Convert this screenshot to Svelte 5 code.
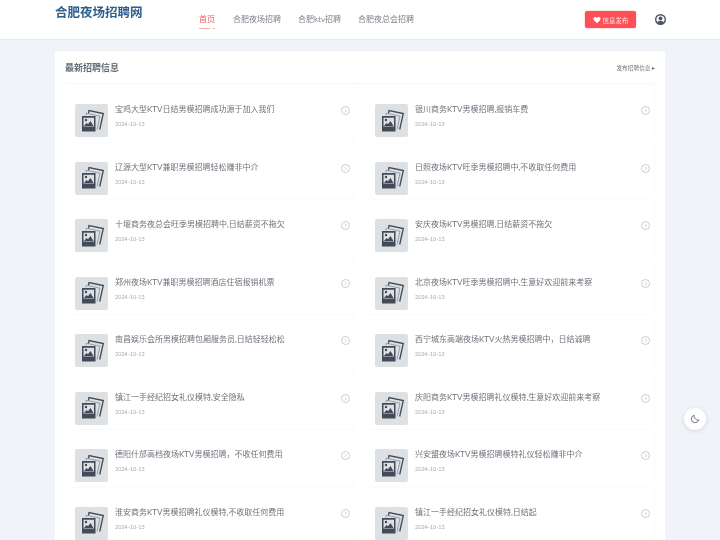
<script>
    const nav = ['首页', '合肥夜场招聘', '合肥ktv招聘', '合肥夜总会招聘'];

    const jobs = [
        '宝鸡大型KTV日结男模招聘成功源于加入我们',
        '银川商务KTV男模招聘,报销车费',
        '辽源大型KTV兼职男模招聘轻松赚非中介',
        '日照夜场KTV旺季男模招聘中,不收取任何费用',
        '十堰商务夜总会旺季男模招聘中,日结薪资不拖欠',
        '安庆夜场KTV男模招聘,日结薪资不拖欠',
        '郑州夜场KTV兼职男模招聘酒店住宿报销机票',
        '北京夜场KTV旺季男模招聘中,生意好欢迎前来考察',
        '南昌娱乐会所男模招聘包厢服务员,日结轻轻松松',
        '西宁城东高端夜场KTV火热男模招聘中，日结诚聘',
        '镇江一手经纪招女礼仪模特,安全隐私',
        '庆阳商务KTV男模招聘礼仪模特,生意好欢迎前来考察',
        '德阳什邡高档夜场KTV男模招聘，不收任何费用',
        '兴安盟夜场KTV男模招聘模特礼仪轻松赚非中介',
        '淮安商务KTV男模招聘礼仪模特,不收取任何费用',
        '镇江一手经纪招女礼仪模特,日结起'
    ];
</script>

<header class="topbar">
    <div class="brand">合肥夜场招聘网</div>
    <nav class="menu">
        {#each nav as item, i}
            <span class="menu-item" class:active={i === 0}>{item}</span>
        {/each}
    </nav>
    <button class="publish">
        <svg viewBox="0 0 24 24" width="8" height="8"><path fill="#fff" d="M12 22 3 12.500C.5 9.800 1 5.500 4 3.800c2.800-1.500 6-.5 8 2.200 2-2.700 5.200-3.700 8-2.200 3 1.700 3.500 6 1 8.700z"/></svg>
        信息发布
    </button>
    <svg class="user" viewBox="0 0 24 24" width="11" height="11">
        <circle cx="12" cy="12" r="10.500" fill="none" stroke="#4b5563" stroke-width="3"/>
        <circle cx="12" cy="9.500" r="4.200" fill="#4b5563"/>
        <path fill="#4b5563" d="M4.500 19c1.500-3.500 4-4.500 7.500-4.500s6 1 7.500 4.500c-2 2-4.500 3.500-7.500 3.500S6.500 21 4.500 19z"/>
    </svg>
</header>

<main class="card">
    <div class="card-head">
        <h2>最新招聘信息</h2>
        <span class="more">发布招聘信息 ▸</span>
    </div>
    <div class="list">
        {#each jobs as title}
            <div class="job">
                <div class="thumb">
                    <svg viewBox="0 0 24 24" width="24" height="24">
                        <path fill="none" stroke="#414b59" stroke-width="1.300" d="M7.500 4.500 8 1.500 22.300 4.500 18.700 20.500"/>
                        <path fill="none" stroke="#7a828d" stroke-width=".7" d="M5 6.500 5.300 4.200 19 7.200 16 20.500"/>
                        <path fill="#414b59" fill-rule="evenodd" d="M1 7H14.500V22.500H1zM2.500 8.700V17.500H13V8.700z"/>
                        <circle cx="5" cy="11" r="1.200" fill="#414b59"/>
                        <path fill="#414b59" d="M3 17 5.500 14 7 15.300 9.500 12 12.500 17z"/>
                    </svg>
                </div>
                <div class="job-text">
                    <div class="job-title">{title}</div>
                    <div class="job-date">2024-10-13</div>
                </div>
                <svg class="arrow" viewBox="0 0 18 18" width="9" height="9">
                    <circle cx="9" cy="9" r="8" fill="none" stroke="#a9afb7" stroke-width="1.200"/>
                    <path fill="none" stroke="#a9afb7" stroke-width="1.200" d="M7.500 5.500 11 9 7.500 12.500"/>
                </svg>
            </div>
        {/each}
    </div>
</main>

<button class="theme" aria-label="夜间模式">
    <svg viewBox="0 0 24 24" width="10" height="10">
        <path fill="none" stroke="#555c66" stroke-width="2" d="M10 3a9 9 0 1 0 11 11c-5 1.500-12-3-11-11z"/>
    </svg>
</button>

<style>
    :global(body) {
        background: #f0f3f7;
        font-family: Lato, "Noto Sans CJK SC", sans-serif;
        height: 540px;
        overflow: hidden;
    }

    .topbar {
        height: 39px;
        background: #fff;
        border-bottom: 1px solid #e6e9ed;
        display: flex;
        align-items: flex-start;
        padding-left: 55px;
        padding-right: 54px;
    }
    .brand, .menu, .publish, .user, .card-head, .list, .theme svg {
        filter: blur(.3px);
    }
    .brand {
        width: 144px;
        font-size: 12.500px;
        line-height: 16px;
        padding-top: 5px;
        font-weight: 700;
        color: #2e5f8c;
    }
    .menu {
        display: flex;
        gap: 17px;
        flex: 1;
    }
    .menu-item {
        font-size: 8px;
        line-height: 12px;
        padding: 13px 0 4px;
        color: #7d838b;
        position: relative;
    }
    .menu-item.active {
        color: #ef5a64;
        margin-right: 1px;
    }
    .menu-item.active::after {
        content: '';
        position: absolute;
        left: 0;
        right: 0;
        bottom: 0;
        height: 1px;
        background: linear-gradient(90deg, #f7a9ae 70%, #fff 70%, #fff 85%, #f7a9ae 85%);
    }
    .publish {
        margin-top: 11px;
        width: 51px;
        height: 17px;
        border: none;
        border-radius: 2px;
        background: #fb5055;
        box-shadow: 0 0 2px rgba(251, 80, 85, .5);
        color: #fdd;
        font: inherit;
        font-size: 6.500px;
        display: flex;
        align-items: center;
        justify-content: center;
        gap: 2px;
        padding: 0;
    }
    .user {
        margin: 14px 0 0 19px;
    }

    .card {
        width: 610px;
        margin: 11px 0 0 55px;
        background: #fff;
        border-radius: 2px;
        padding: 0 10px;
        box-sizing: border-box;
    }
    .card-head {
        height: 32px;
        display: flex;
        justify-content: space-between;
        align-items: center;
        border-bottom: 1px solid #f6f7f9;
    }
    h2 {
        margin: 0;
        font-size: 9px;
        font-weight: 700;
        color: #646a74;
    }
    .more {
        font-size: 5.700px;
        color: #70767e;
    }
    .list {
        display: grid;
        grid-template-columns: 290px 290px;
        column-gap: 10px;
        grid-auto-rows: 57.500px;
        padding-top: 1px;
    }
    .job {
        display: flex;
        align-items: flex-start;
        padding: 19px 0 0 10px;
        box-sizing: border-box;
        border-right: 1px solid #fbfbfc;
        border-bottom: 1px solid #fbfbfc;
    }
    .thumb {
        flex: none;
        width: 33px;
        height: 33px;
        box-sizing: border-box;
        padding-left: 3px;
        background: #dde1e4;
        border-radius: 2px;
        display: flex;
        align-items: center;
        justify-content: center;
    }
    .job-text {
        flex: 1;
        margin: -1px 0 0 7px;
    }
    .job-title {
        font-size: 8px;
        line-height: 12px;
        color: #6d737b;
    }
    .job-date {
        font-size: 5.500px;
        line-height: 8px;
        margin-top: 5px;
        color: #a7abb1;
    }
    .arrow {
        margin: 2px 4px 0 0;
    }

    .theme {
        position: fixed;
        left: 684px;
        top: 408px;
        width: 22px;
        height: 22px;
        padding: 0;
        border: none;
        border-radius: 50%;
        background: #fff;
        box-shadow: 0 1px 5px rgba(0, 0, 0, .12);
        display: flex;
        align-items: center;
        justify-content: center;
    }
</style>
